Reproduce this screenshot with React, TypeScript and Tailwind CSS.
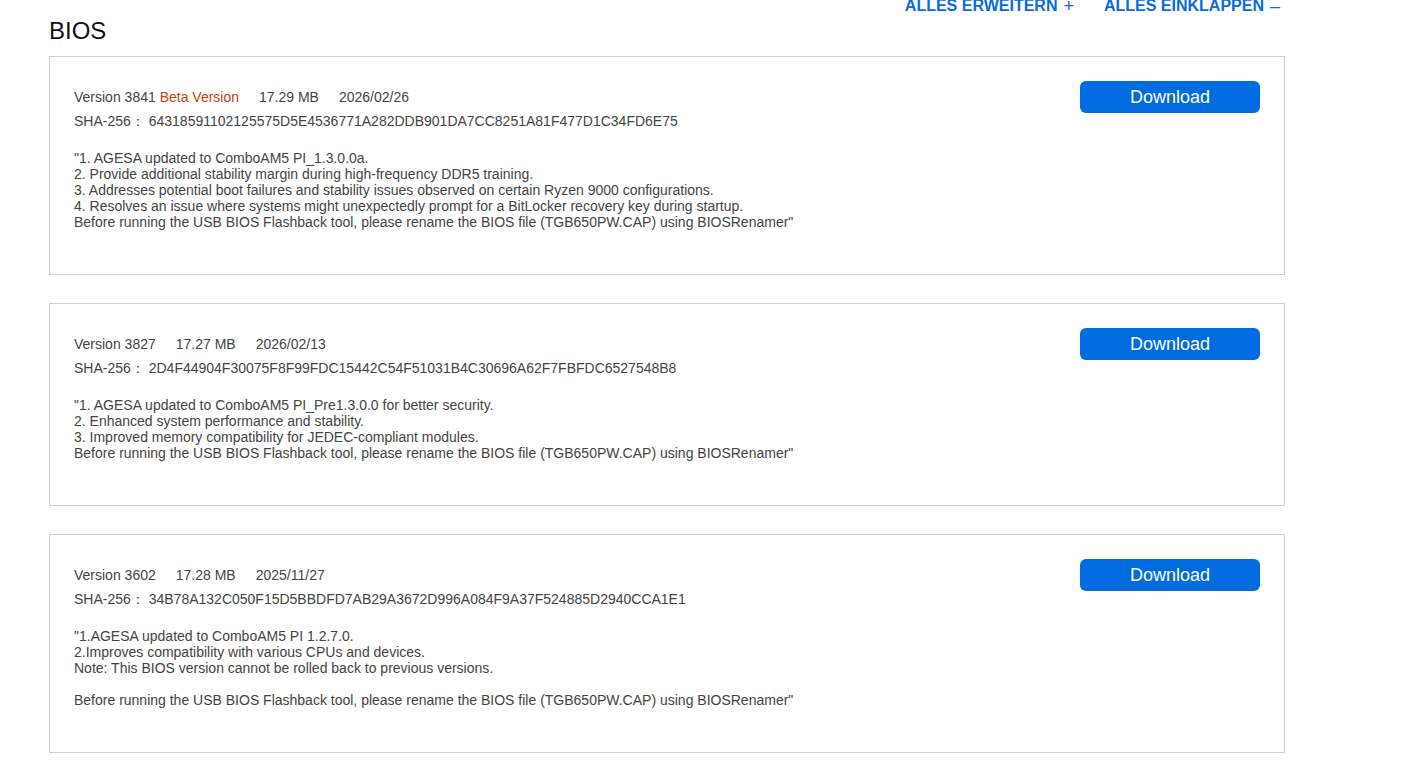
import React from 'react';

interface BiosRelease {
  version: string;
  beta?: boolean;
  size: string;
  date: string;
  sha: string;
  notes: string[];
}

const releases: BiosRelease[] = [
  {
    version: '3841',
    beta: true,
    size: '17.29 MB',
    date: '2026/02/26',
    sha: '64318591102125575D5E4536771A282DDB901DA7CC8251A81F477D1C34FD6E75',
    notes: [
      '"1. AGESA updated to ComboAM5 PI_1.3.0.0a.',
      '2. Provide additional stability margin during high-frequency DDR5 training.',
      '3. Addresses potential boot failures and stability issues observed on certain Ryzen 9000 configurations.',
      '4. Resolves an issue where systems might unexpectedly prompt for a BitLocker recovery key during startup.',
      'Before running the USB BIOS Flashback tool, please rename the BIOS file (TGB650PW.CAP) using BIOSRenamer"',
    ],
  },
  {
    version: '3827',
    size: '17.27 MB',
    date: '2026/02/13',
    sha: '2D4F44904F30075F8F99FDC15442C54F51031B4C30696A62F7FBFDC6527548B8',
    notes: [
      '"1. AGESA updated to ComboAM5 PI_Pre1.3.0.0 for better security.',
      '2. Enhanced system performance and stability.',
      '3. Improved memory compatibility for JEDEC-compliant modules.',
      'Before running the USB BIOS Flashback tool, please rename the BIOS file (TGB650PW.CAP) using BIOSRenamer"',
    ],
  },
  {
    version: '3602',
    size: '17.28 MB',
    date: '2025/11/27',
    sha: '34B78A132C050F15D5BBDFD7AB29A3672D996A084F9A37F524885D2940CCA1E1',
    notes: [
      '"1.AGESA updated to ComboAM5 PI 1.2.7.0.',
      '2.Improves compatibility with various CPUs and devices.',
      'Note: This BIOS version cannot be rolled back to previous versions.',
      '',
      'Before running the USB BIOS Flashback tool, please rename the BIOS file (TGB650PW.CAP) using BIOSRenamer"',
    ],
  },
];

const ReleaseCard: React.FC<{ item: BiosRelease }> = ({ item }) => (
  <div className="border border-[#cfcfcf] bg-white pt-6 pb-11 px-6 flex justify-between items-start">
    <div className="mt-1 text-[14px] text-[#444]">
      <div className="leading-6 flex">
        <span className="mr-5">
          Version {item.version}
          {item.beta && <span className="text-[#c8410f]"> Beta Version</span>}
        </span>
        <span className="mr-5">{item.size}</span>
        <span>{item.date}</span>
      </div>
      <div className="leading-6">SHA-256：&nbsp;{item.sha}</div>
      <div className="mt-[17px] leading-4">
        {item.notes.map((line, idx) => (
          <div key={idx} className="h-4 whitespace-pre">
            {line}
          </div>
        ))}
      </div>
    </div>
    <button className="w-[180px] h-8 rounded-md bg-[#006ce0] text-white text-[18px] leading-8 shrink-0">
      Download
    </button>
  </div>
);

export default function App() {
  return (
    <div className="min-h-screen bg-white font-['Liberation_Sans',Arial,sans-serif] overflow-hidden">
      <div className="ml-[49px] w-[1236px] pb-6">
        <div className="flex justify-between items-start">
          <h2 className="mt-[15px] mb-[9px] text-[24px] leading-8 text-[#111]">BIOS</h2>
          <div className="-mt-1 mr-[5px] flex gap-[30px] text-[16px] leading-5 font-bold text-[#0a6be0]">
            <button className="flex items-center gap-1.5 uppercase">
              Alles erweitern <span className="font-normal text-[18px]">+</span>
            </button>
            <button className="flex items-center gap-1.5 uppercase">
              Alles einklappen <span className="font-normal text-[18px]">–</span>
            </button>
          </div>
        </div>
        <div className="flex flex-col gap-7">
          {releases.map((r) => (
            <ReleaseCard key={r.version} item={r} />
          ))}
        </div>
      </div>
    </div>
  );
}
